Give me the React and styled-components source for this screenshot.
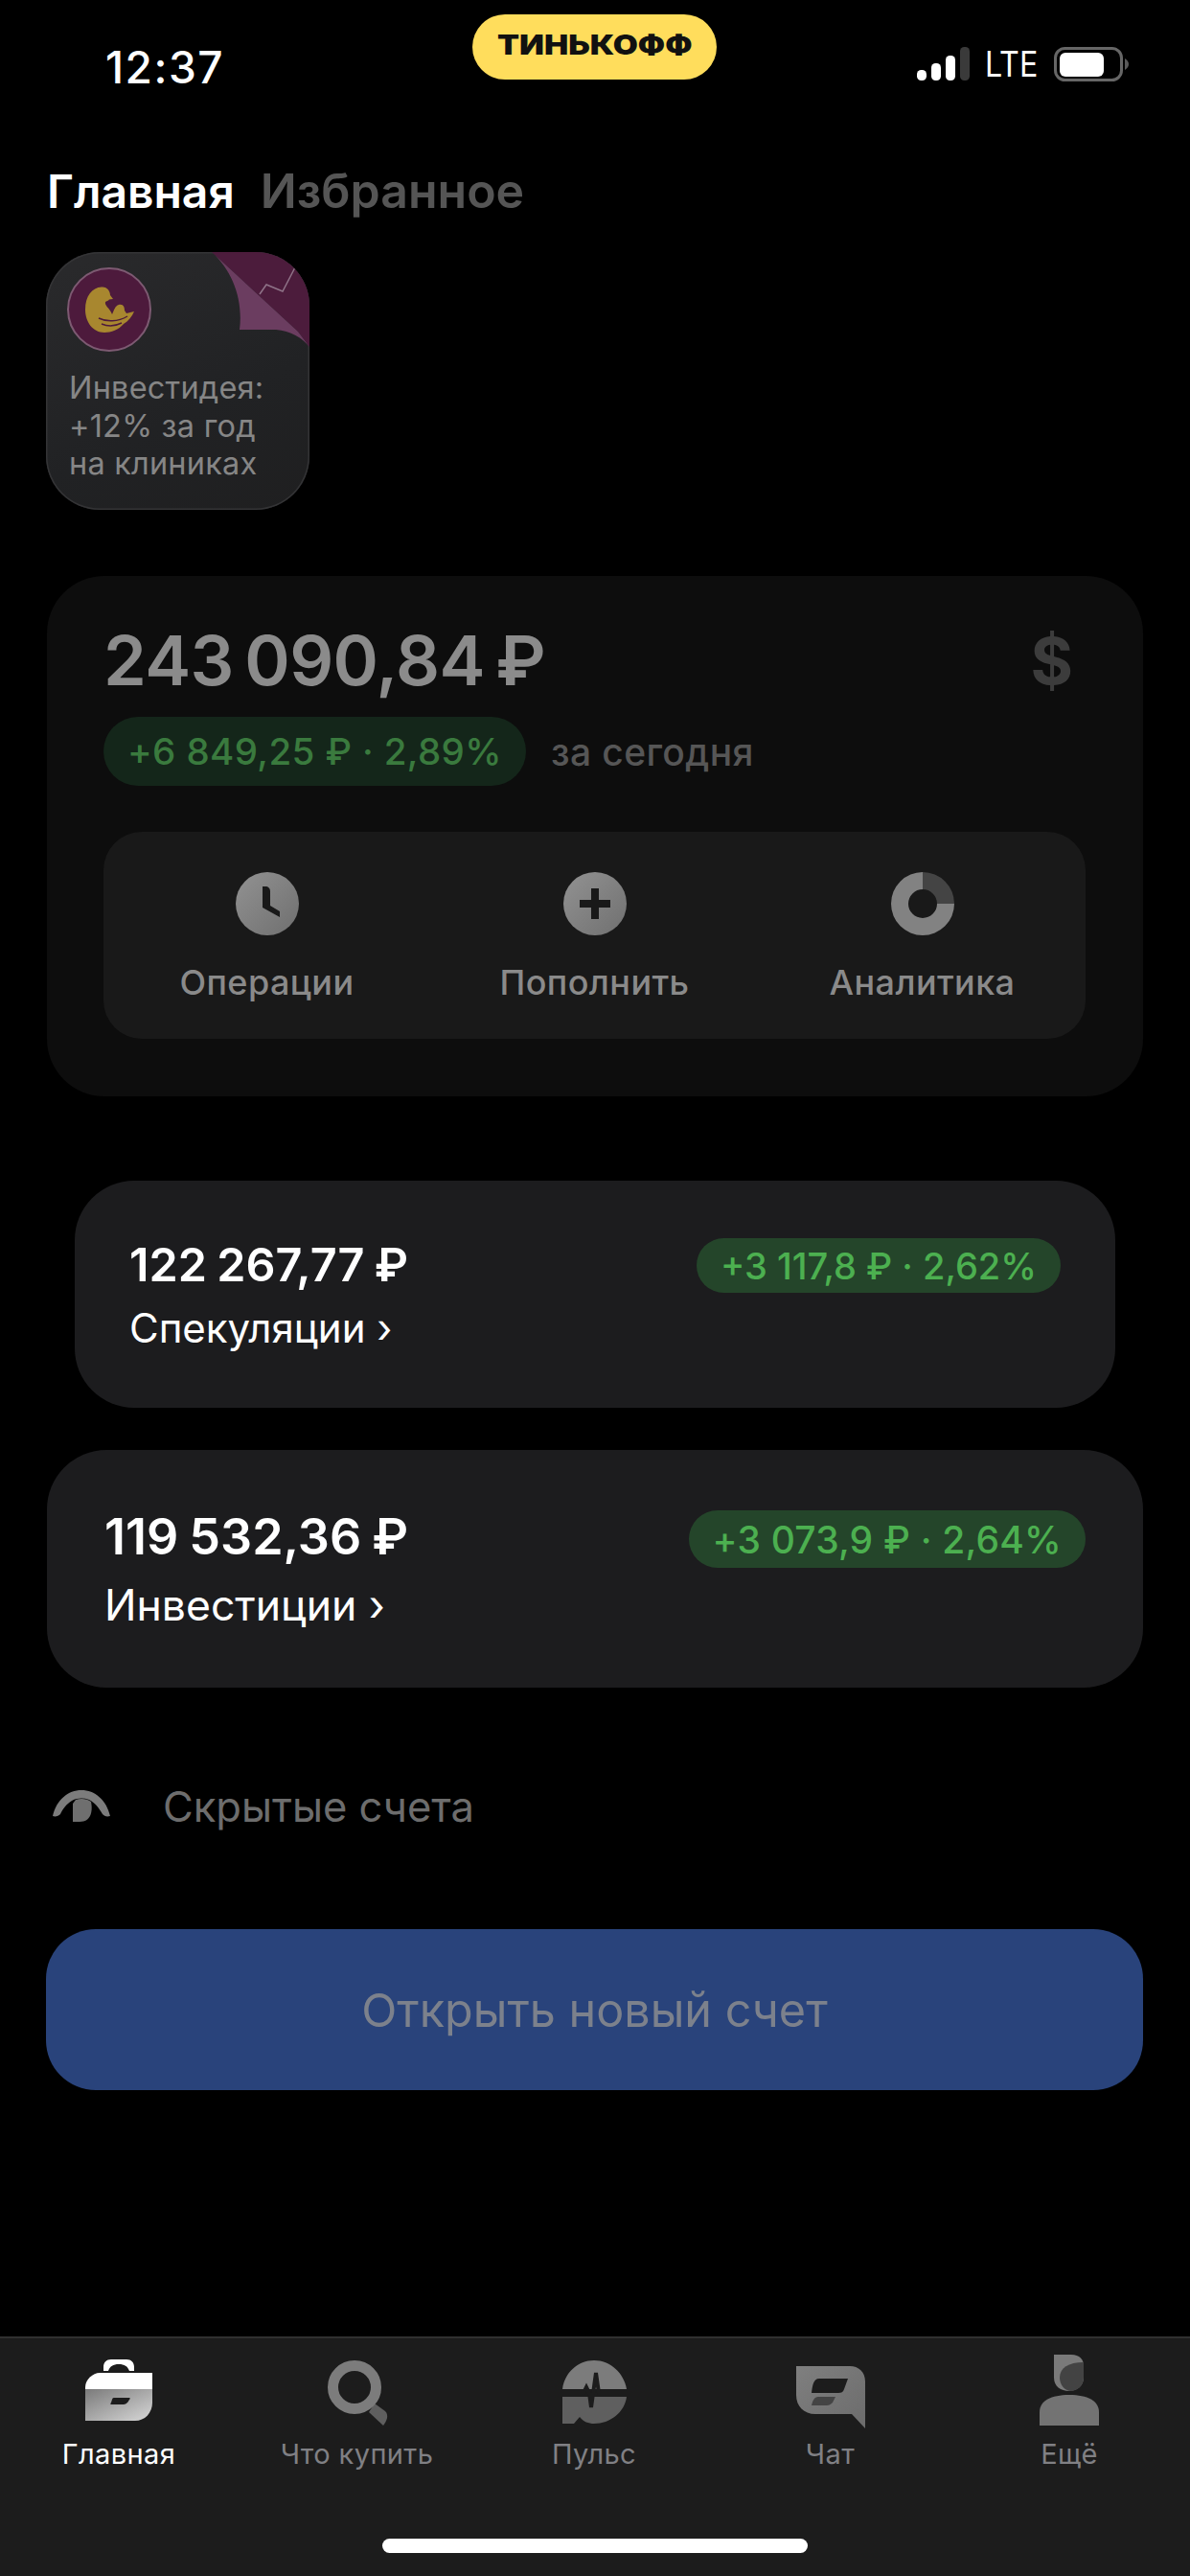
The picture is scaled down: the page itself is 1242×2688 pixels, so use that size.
import React from 'react';
import styled, { createGlobalStyle } from 'styled-components';

const Global = createGlobalStyle`
  html, body { margin: 0; padding: 0; background: #000; }
  * { box-sizing: border-box; }
`;
const Screen = styled.div`
  width: 1242px; height: 2688px; background: #000; display: flex; flex-direction: column;
  font-family: Inter, "Noto Sans", sans-serif; color: #fff; overflow: hidden;
`;
const StatusBar = styled.div`
  height: 100px; padding: 15px 0 0 110px; display: flex; align-items: flex-start;
`;
const Time = styled.div`
  width: 383px; margin-top: 27px; font-size: 46px; line-height: 56px; font-weight: 500; letter-spacing: 1.5px;
`;
const Logo = styled.div`
  width: 255px; height: 68px; border-radius: 34px; background: #ffdd5c; color: #111;
  display: flex; align-items: center; justify-content: center;
`;
const LogoText = styled.span`
  display: inline-block; font-size: 28px; font-weight: 900; transform: scaleX(1.2); margin-top: -4px;
`;
const StatusRight = styled.div`
  margin: 34px 0 0 209px; display: flex; align-items: center; gap: 16px;
`;
const Lte = styled.span`
  font-size: 37px; line-height: 36px; font-weight: 400; transform: scaleX(.87); transform-origin: left; width: 56px;
`;
const Tabs = styled.div`
  margin-top: 66px; padding: 0 0 30px 49px; display: flex; gap: 27px; align-items: baseline; line-height: 66px; font-weight: 600;
`;
const Tab = styled.span`
  font-size: ${p => p.$active ? 48 : 50}px; color: ${p => p.$active ? '#fff' : '#555'};
`;
const Story = styled.div`
  position: relative; overflow: hidden; margin: 0 0 0 48px; width: 275px; height: 269px; border-radius: 56px;
  background: linear-gradient(155deg, #2a2a2c, #212224 60%, #1f1f20); box-shadow: inset 0 0 0 1.5px #343436;
`;
const Corner = styled.svg` position: absolute; left: 0; top: 0; `;
const StoryAvatar = styled.svg` display: block; margin: 15px 0 0 21px; position: relative; `;
const StoryText = styled.div`
  position: relative; margin: 17px 0 0 24px; font-size: 32.5px; line-height: 39.5px; letter-spacing: .2px; color: #868686;
`;
const Portfolio = styled.section`
  margin: 69px 49px 0; height: 543px; padding: 46px 60px 0 59px; border-radius: 60px; background: #0d0d0d;
`;
const PortfolioHead = styled.div` display: flex; justify-content: space-between; align-items: center; `;
const Total = styled.div`
  font-size: 72px; line-height: 84px; font-weight: 600; color: #8b8b8b; letter-spacing: -0.6px; word-spacing: -6px;
`;
const Dollar = styled.div` font-size: 68px; line-height: 84px; font-weight: 700; color: #3c3c3c; margin-right: 13px; `;
const TodayRow = styled.div` margin-top: 17px; display: flex; align-items: center; gap: 26px; `;
const Pill = styled.div`
  height: ${p => p.$h}px; padding: 0 ${p => p.$pad}px; border-radius: ${p => p.$h / 2}px; background: ${p => p.$bg}; color: ${p => p.$fg};
  font-size: ${p => p.$size}px; font-weight: 500; letter-spacing: ${p => p.$ls}px; display: flex; align-items: center; white-space: nowrap;
`;
const Today = styled.span` font-size: 39px; font-weight: 500; color: #565656; letter-spacing: .4px; `;
const Actions = styled.div`
  margin-top: 48px; height: 216px; padding-top: 42px; border-radius: 40px; background: #191919; display: grid; grid-template-columns: repeat(3, 342px); justify-content: center;
`;
const Action = styled.div` display: flex; flex-direction: column; align-items: center; gap: 27px; `;
const ActionLabel = styled.span` font-size: 36px; line-height: 44px; font-weight: 500; color: #8a8a8a; letter-spacing: .4px; `;
const AccountCard = styled.section`
  display: flex; justify-content: space-between; align-items: flex-start; background: #1c1c1e; border-radius: 62px;
  margin: ${p => p.$top}px ${p => p.$side}px 0; height: ${p => p.$height}px; padding: ${p => p.$padTop}px ${p => p.$pad}px 0;
`;
const Amount = styled.div`
  font-size: ${p => p.$size}px; line-height: 56px; font-weight: 600; word-spacing: -2px;
`;
const AccountName = styled.div`
  margin-top: ${p => p.$gap}px; font-size: ${p => p.$size}px; line-height: 50px; white-space: nowrap;
`;
const Hidden = styled.div`
  margin: 98px 0 0 55px; display: flex; align-items: center; gap: 55px; font-size: 43.5px; line-height: 52px; color: #6d6d6d;
`;
const OpenButton = styled.div`
  margin: 102px 49px 0 48px; height: 168px; border-radius: 52px; background: #29437b; color: #7c818c;
  display: flex; align-items: center; justify-content: center; font-size: 48.5px;
`;
const TabBar = styled.nav`
  margin-top: auto; height: 250px; background: #1c1c1c; border-top: 2px solid #303030; position: relative;
  display: grid; grid-template-columns: 248px 249px 246px 247px 252px;
`;
const NavItem = styled.div` display: flex; flex-direction: column; align-items: center; height: 139px; `;
const NavLabel = styled.span`
  font-size: 29px; line-height: 36px; letter-spacing: .4px; color: ${p => p.$active ? '#fff' : '#808084'}; margin-top: auto; white-space: nowrap;
`;
const NavIcon = styled.svg` display: block; margin-top: ${p => p.$top}px; overflow: visible; `;
const HomeIndicator = styled.div`
  position: absolute; left: 399px; top: 209px; width: 444px; height: 15px; border-radius: 8px; background: #fff;
`;

const Signal = () => (
  <svg width="55" height="36" viewBox="0 0 55 36">
    <rect x="0" y="24" width="10" height="11" rx="4.5" fill="#fff" />
    <rect x="15" y="17" width="10" height="18" rx="4.5" fill="#fff" />
    <rect x="30" y="9" width="10" height="26" rx="4.5" fill="#fff" />
    <rect x="45" y="0" width="10" height="35" rx="4.5" fill="#3a3a3a" />
  </svg>
);
const Battery = () => (
  <svg width="78" height="36" viewBox="0 0 78 36">
    <rect x="1.5" y="1.5" width="69" height="33" rx="10" fill="none" stroke="#666" strokeWidth="3" />
    <rect x="6" y="6" width="46" height="25" rx="6" fill="#fff" />
    <path d="M74 12c3 2 4 4 4 6s-1 4-4 6z" fill="#5a5a5a" />
  </svg>
);
const Avatar = () => (
  <StoryAvatar width="90" height="90" viewBox="0 0 90 90">
    <circle cx="45" cy="45" r="43" fill="#4d1a3c" stroke="#7d5a72" strokeWidth="2" />
    <path d="M20 45C20 31 27 22 37 21.5C43 21 46 26 46 30L49 34L45 34.5C44 36 42 36 41 37C40 41 45 43 48 50C50 46 51 41 55 40C60 39 61 43 61 46L63 49L71 47C69 52 65 57 60 60C55 66 47 69 40 69C28 69 20 58 20 45Z" fill="#a8872f" />
    <path d="M34 54C42 58 54 58 64 52M37 60C44 63 52 62 58 59" stroke="#4d1a3c" strokeWidth="1.4" fill="none" />
  </StoryAvatar>
);
const StoryCorner = () => (
  <Corner width="275" height="269" viewBox="0 0 275 269">
    <path d="M173 0H275V99L263 83Z" fill="#4c1c3c" />
    <path d="M173 0C195 20 206 50 202 81L240 81C255 82 268 90 275 99L263 83Z" fill="#6b3d60" />
    <path d="M223 44L230 34L247 41L260 16L268 0" fill="none" stroke="#8f7388" strokeWidth="1.5" />
  </Corner>
);
const Clock = () => (
  <svg width="66" height="66" viewBox="0 0 66 66">
    <defs><linearGradient id="ac" x1="0" y1="0" x2="1" y2="1"><stop offset="0" stopColor="#929292" /><stop offset="1" stopColor="#6f6f6f" /></linearGradient></defs>
    <circle cx="33" cy="33" r="33" fill="url(#ac)" />
    <path d="M28 15h3c3 0 5 2 5 5v15l10 6v6L28 37z" fill="#191919" />
  </svg>
);
const Plus = () => (
  <svg width="66" height="66" viewBox="0 0 66 66">
    <defs><linearGradient id="ap" x1="0" y1="0" x2="1" y2="1"><stop offset="0" stopColor="#929292" /><stop offset="1" stopColor="#707070" /></linearGradient></defs>
    <circle cx="33" cy="33" r="33" fill="url(#ap)" />
    <path d="M29 17h8v12h12v8H37v12h-8V37H17v-8h12z" fill="#191919" />
  </svg>
);
const Donut = () => (
  <svg width="66" height="66" viewBox="0 0 66 66">
    <path d="M33 0a33 33 0 0 1 33 33H48a15 15 0 0 0-15-15z" fill="#444" />
    <path d="M33 0v18a15 15 0 1 0 15 15h18A33 33 0 1 1 33 0z" fill="#828282" />
  </svg>
);
const Eye = () => (
  <svg width="60" height="34" viewBox="0 0 60 34">
    <path d="M0 27C4 10 16 0 30 0S56 10 60 27C56 28 54 27 52 25C48 18 44 13 38 10C32 8 26 8 20 11C14 15 11 19 8 25C6 27 3 28 0 27Z" fill="#7c7c7c" />
    <path d="M21 33V14L24 10C30 8 36 9 40 12C42 22 40 33 28 33Z" fill="#6f6f6f" />
  </svg>
);
const BriefcaseIcon = () => (
  <NavIcon $top={21} width="70" height="65" viewBox="0 0 70 65">
    <defs><linearGradient id="bc" x1="0" y1="0" x2="1" y2="1"><stop offset="0" stopColor="#7a7a7a" /><stop offset="1" stopColor="#d8d8d8" /></linearGradient></defs>
    <path d="M19 13V9c0-5 3-8 8-8h16c5 0 8 3 8 8v4h-5c-2-5-5-7-11-7s-9 2-11 7z" fill="#fff" />
    <path d="M0 32V30C0 22 8 15 15 15H70V32z" fill="#fff" />
    <path d="M0 32H70V46C70 57 62 65 52 65H0z" fill="url(#bc)" />
    <path d="M30 41h16c1 0 1 1 0 2-2 4-4 5-7 5H27c-1 0-1-1 0-2 1-3 1-5 3-5z" fill="#1c1c1c" />
  </NavIcon>
);
const SearchIcon = () => (
  <NavIcon $top={23} width="62" height="69" viewBox="0 0 62 69">
    <path d="M43 54L49 45L60 53C64 57 62 63 58 68Z" fill="#5f5f5f" />
    <circle cx="28" cy="28" r="22.5" fill="none" stroke="#7c7c7c" strokeWidth="11" />
  </NavIcon>
);
const PulseIcon = () => (
  <NavIcon $top={23} width="67" height="66" viewBox="0 0 67 66">
    <path d="M0 30C2 13 16 0 33 0s31 13 34 30z" fill="#7c7c7c" />
    <path d="M0 38H67C65 54 50 66 33 66c-6 0-11-2-15-7l-6 7H0z" fill="#5f5f5f" />
    <path d="M0 34H22L25 28L28 34L30 49L35 13L38 34H67" fill="none" stroke="#1c1c1c" strokeWidth="4" />
  </NavIcon>
);
const ChatIcon = () => (
  <NavIcon $top={29} width="72" height="65" viewBox="0 0 72 65">
    <defs><linearGradient id="ch" x1="0" y1="0" x2="1" y2="1"><stop offset="0" stopColor="#7f7f7f" /><stop offset="1" stopColor="#6c6c6c" /></linearGradient></defs>
    <path d="M0 0H56C65 0 72 6 72 16V65L58 50H20C8 50 0 42 0 30z" fill="url(#ch)" />
    <path d="M24 13H54L50 24C49 27 47 28 44 28H16C17 20 18 13 24 13z" fill="#1c1c1c" />
    <path d="M23 32H41L38 38C35 41 33 41 30 41H16C17 36 19 32 23 32z" fill="#444" />
  </NavIcon>
);
const PersonIcon = () => (
  <NavIcon $top={17} width="62" height="74" viewBox="0 0 62 74">
    <path d="M15 0H33C42 0 46 5 46 12V24C46 33 38 38 31 38 22 38 15 33 15 24z" fill="#7a7a7a" />
    <path d="M21 24C21 14 30 8 46 8V24C46 33 38 38 33 38 26 38 21 31 21 24z" fill="#434343" />
    <path d="M0 74V60C0 48 12 42 31 42S62 48 62 60V74z" fill="#737373" />
  </NavIcon>
);

const nav = [
  { label: 'Главная', Icon: BriefcaseIcon, active: true },
  { label: 'Что купить', Icon: SearchIcon },
  { label: 'Пульс', Icon: PulseIcon },
  { label: 'Чат', Icon: ChatIcon },
  { label: 'Ещё', Icon: PersonIcon },
];

export default function App() {
  return (
    <Screen>
      <Global />
      <StatusBar>
        <Time>12:37</Time>
        <Logo><LogoText>ТИНЬКОФФ</LogoText></Logo>
        <StatusRight><Signal /><Lte>LTE</Lte><Battery /></StatusRight>
      </StatusBar>
      <Tabs><Tab $active>Главная</Tab><Tab>Избранное</Tab></Tabs>
      <Story>
        <StoryCorner />
        <Avatar />
        <StoryText>Инвестидея:<br />+12% за год<br />на клиниках</StoryText>
      </Story>
      <Portfolio>
        <PortfolioHead><Total>243 090,84 ₽</Total><Dollar>$</Dollar></PortfolioHead>
        <TodayRow>
          <Pill $h={72} $pad={25} $size={38.5} $ls={0.4} $bg="#14261a" $fg="#3a7a3e">+6 849,25 ₽ · 2,89%</Pill>
          <Today>за сегодня</Today>
        </TodayRow>
        <Actions>
          <Action><Clock /><ActionLabel>Операции</ActionLabel></Action>
          <Action><Plus /><ActionLabel>Пополнить</ActionLabel></Action>
          <Action><Donut /><ActionLabel>Аналитика</ActionLabel></Action>
        </Actions>
      </Portfolio>
      <AccountCard $top={88} $side={78} $height={237} $padTop={60} $pad={57}>
        <div><Amount $size={48.5}>122 267,77 ₽</Amount><AccountName $gap={13} $size={42}>Спекуляции ›</AccountName></div>
        <Pill $h={57} $pad={25} $size={38} $ls={0} $bg="#24452a" $fg="#4cb050">+3 117,8 ₽ · 2,62%</Pill>
      </AccountCard>
      <AccountCard $top={44} $side={49} $height={248} $padTop={63} $pad={60}>
        <div><Amount $size={52}>119 532,36 ₽</Amount><AccountName $gap={18} $size={44.5}>Инвестиции ›</AccountName></div>
        <Pill $h={60} $pad={25} $size={39} $ls={0.2} $bg="#24452a" $fg="#4cb050">+3 073,9 ₽ · 2,64%</Pill>
      </AccountCard>
      <Hidden><Eye />Скрытые счета</Hidden>
      <OpenButton>Открыть новый счет</OpenButton>
      <TabBar>
        {nav.map(({ label, Icon, active }) => (
          <NavItem key={label}><Icon /><NavLabel $active={active}>{label}</NavLabel></NavItem>
        ))}
        <HomeIndicator />
      </TabBar>
    </Screen>
  );
}
